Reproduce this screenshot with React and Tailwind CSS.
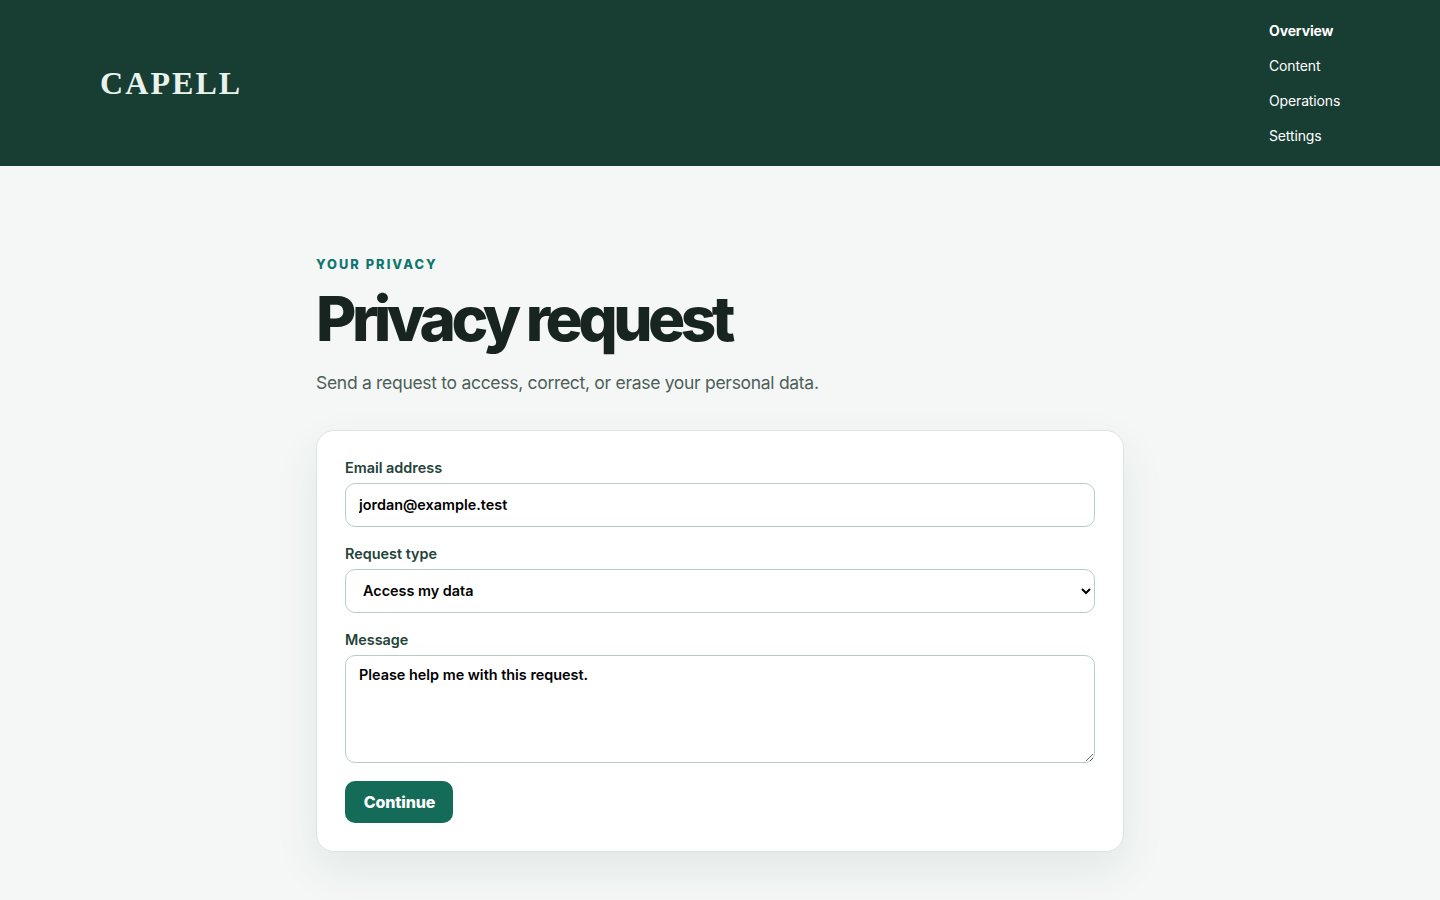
const navItems = [
  { label: 'Overview', active: true },
  { label: 'Content' },
  { label: 'Operations' },
  { label: 'Settings' },
];

export default function App() {
  return (
    <div className="min-h-screen bg-[#f4f7f6] font-['Inter',sans-serif]">

      {/* Header */}
      <header className="h-[166px] bg-[#183d33] px-[100px] flex items-center justify-between">
        <div className="font-['Liberation_Serif',serif] font-bold text-[32px] leading-none tracking-[0.065em] text-[#e8f3ee]">CAPELL</div>
        <nav className="flex flex-col gap-[14px] w-[71px]">
          {navItems.map(({ label, active }) => (
            <a key={label} href="#" className={`text-sm leading-[21px] tracking-[-0.01em] text-white ${active ? 'font-bold' : 'font-normal'}`}>
              {label}
            </a>
          ))}
        </nav>
      </header>

      {/* Main */}
      <main className="w-[808px] mx-auto pt-[90px]">
        <p className="text-[12.8px] leading-[18px] font-extrabold tracking-[0.16em] uppercase text-[#0f766e]">Your privacy</p>
        <h1 className="mt-[10px] text-[62px] leading-[70px] font-extrabold tracking-[-0.073em] text-[#17241f]">Privacy request</h1>
        <p className="mt-[15px] text-[17.5px] leading-[27px] tracking-[-0.017em] text-[#4d5f58]">Send a request to access, correct, or erase your personal data.</p>

        <form className="mt-[34px] bg-white border border-[#dce5e2] rounded-[18px] px-7 pt-[26px] pb-7 shadow-[0_18px_45px_rgba(24,61,51,0.08)]">
          <label className="block text-[14.4px] leading-[21px] font-semibold text-[#254238]">Email address</label>
          <input
            type="text"
            defaultValue="jordan@example.test"
            className="mt-[5px] block w-full h-[44px] px-[13px] pb-[2px] bg-white border border-[#b9cdc6] rounded-[10px] text-[14.4px] font-semibold text-black outline-none"
          />

          <label className="mt-[16px] block text-[14.4px] leading-[21px] font-semibold text-[#254238]">Request type</label>
          <select
            defaultValue="access"
            style={{ appearance: 'auto' }}
            className="mt-[5px] block w-full h-[44px] px-[13px] pb-[2px] bg-white border border-[#b9cdc6] rounded-[10px] text-[14.4px] font-semibold text-black outline-none"
          >
            <option value="access">Access my data</option>
            <option value="correct">Correct my data</option>
            <option value="erase">Erase my data</option>
          </select>

          <label className="mt-[16px] block text-[14.4px] leading-[21px] font-semibold text-[#254238]">Message</label>
          <textarea
            defaultValue="Please help me with this request."
            className="mt-[5px] block w-full h-[108px] px-[13px] pt-[8px] pb-[10px] bg-white border border-[#b9cdc6] rounded-[10px] text-[14.4px] font-semibold text-black outline-none"
          />

          <button type="button" className="mt-[18px] block h-[42px] w-[108px] pl-px bg-[#146c58] rounded-[10px] text-base font-extrabold tracking-[-0.01em] text-white">
            Continue
          </button>
        </form>
      </main>
    </div>
  );
}
